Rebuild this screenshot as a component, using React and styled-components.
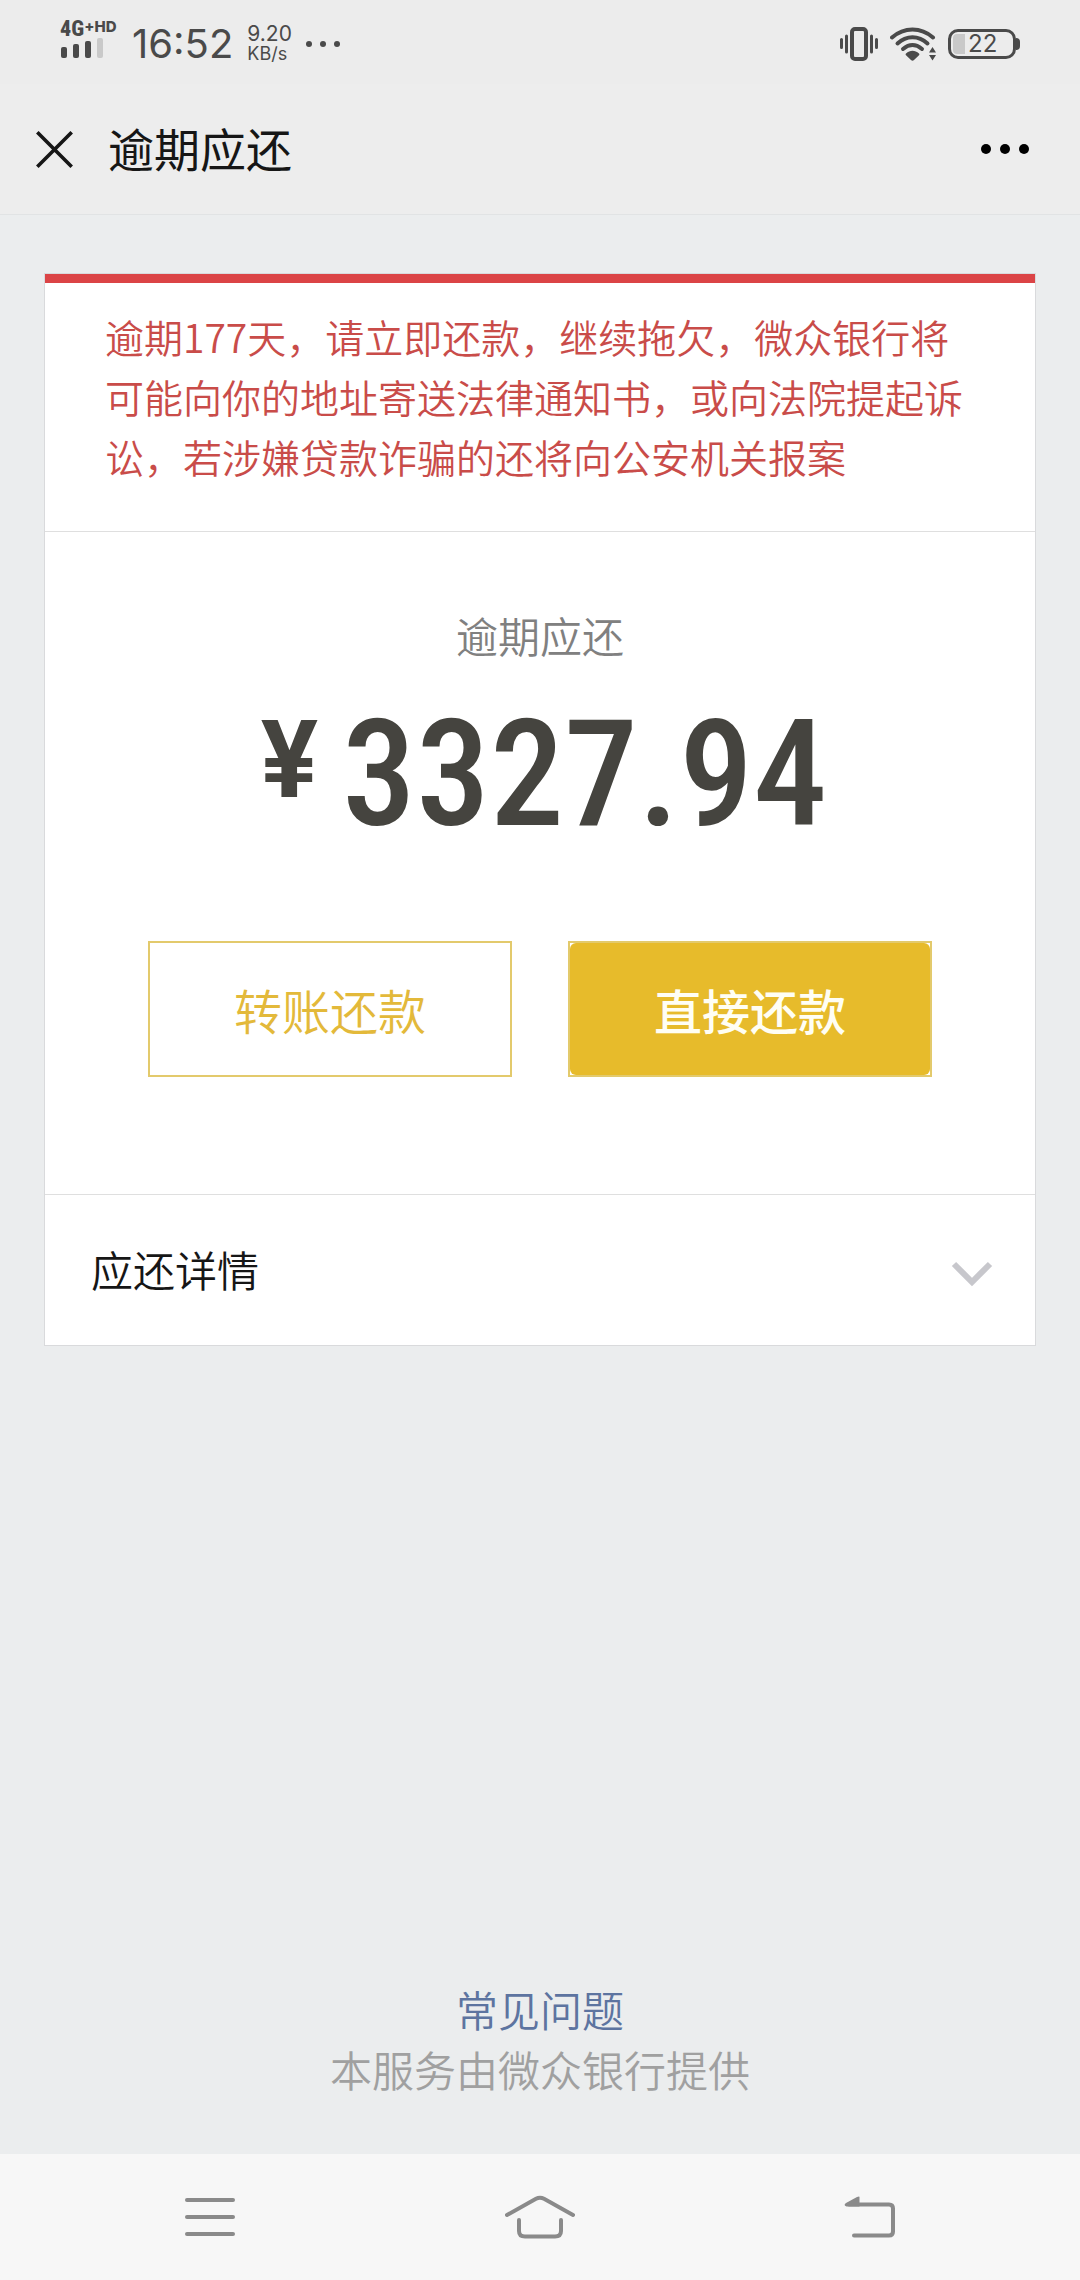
import React, { useState } from 'react';
import styled, { createGlobalStyle } from 'styled-components';

const GlobalStyle = createGlobalStyle`
  * {
    box-sizing: border-box;
  }

  body {
    margin: 0;
    background: #ebedee;
    font-family: 'Noto Sans CJK SC', sans-serif;
    font-weight: 350;
  }

  button {
    border: none;
    padding: 0;
    background: none;
    font: inherit;
    color: inherit;
    cursor: pointer;
  }

  svg {
    display: block;
  }
`;

const Page = styled.div`
  min-height: 100vh;
  display: flex;
  flex-direction: column;
`;

const StatusBar = styled.div`
  height: 84px;
  padding: 3px 60px 0;
  display: flex;
  justify-content: space-between;
  align-items: center;
  background: #ececec;
  color: #4a4a4a;
  font-family: Inter, sans-serif;
  font-weight: 400;
`;

const StatusGroup = styled.div`
  display: flex;
  align-items: center;
  gap: ${props => props.$gap};
`;

const Signal = styled.div`
  width: 58px;
  padding-bottom: 8px;
  display: flex;
  flex-direction: column;
`;

const Network = styled.div`
  display: flex;
  align-items: flex-start;
  font-size: 15px;
  line-height: 12px;
  font-weight: 800;
`;

const NetworkType = styled.span`
  font-family: 'Roboto Condensed', Roboto, sans-serif;
  font-size: 22px;
  line-height: 16px;
`;

const Clock = styled.span`
  font-size: 40px;
  line-height: 44px;
`;

const Speed = styled.div`
  display: flex;
  flex-direction: column;
`;

const SpeedLine = styled.span`
  font-size: ${props => props.$size};
  line-height: 20px;
`;

const Battery = styled.div`
  display: flex;
  align-items: center;
`;

const BatteryBody = styled.div`
  width: 68px;
  height: 30px;
  padding: 0 2px;
  display: flex;
  align-items: center;
  gap: 3px;
  border: 3px solid #4a4a4a;
  border-radius: 10px;
  font-size: 24px;
  line-height: 24px;
`;

const BatteryLevel = styled.div`
  width: 12px;
  height: 20px;
  background: #c9c9c9;
  border-radius: 4px 0 0 4px;
`;

const BatteryCap = styled.div`
  width: 4px;
  height: 12px;
  background: #4a4a4a;
  border-radius: 0 4px 4px 0;
`;

const Header = styled.header`
  height: 131px;
  padding: 0 51px 0 36px;
  display: flex;
  align-items: center;
  gap: 35px;
  background: #ededed;
  border-bottom: 1px solid #e1e3e4;
`;

const HeaderTitle = styled.h1`
  flex: 1;
  margin: 0;
  padding-bottom: 4px;
  font-size: 46px;
  line-height: 60px;
  font-weight: 400;
  color: #161616;
`;

const Main = styled.main`
  flex: 1;
  display: flex;
  flex-direction: column;
  padding: 58px 44px 55px;
`;

const Card = styled.section`
  background: #fff;
  border: 1px solid #d9dadc;
`;

const Notice = styled.p`
  margin: 0;
  padding: 23px 60px 45px;
  border-top: 9px solid #db4446;
  border-bottom: 1px solid #dfdfdf;
  font-size: 39px;
  line-height: 60px;
  color: #c94c49;
`;

const Summary = styled.div`
  padding: 73px 24px 117px;
  border-bottom: 1px solid #dfdfdf;
`;

const SummaryLabel = styled.div`
  text-align: center;
  font-size: 42px;
  line-height: 60px;
  color: #808080;
`;

const Amount = styled.div`
  display: flex;
  justify-content: center;
  align-items: flex-start;
  gap: 24px;
  margin: 36px 0 92px;
  padding-left: 8px;
  font-family: 'Roboto Condensed', Roboto, sans-serif;
  font-weight: 500;
  color: #45443f;
`;

const Currency = styled.span`
  font-family: Roboto, sans-serif;
  font-size: 107px;
  line-height: 120px;
  font-weight: 700;
`;

const Digits = styled.span`
  font-size: 148px;
  line-height: 148px;
`;

const Actions = styled.div`
  display: flex;
  justify-content: center;
  gap: 56px;
`;

const ActionButton = styled.button`
  width: 364px;
  height: 136px;
  border: 2px solid #e3ca6c;
  font-size: 48px;
  line-height: 72px;
  color: #e3b93a;
`;

const PrimaryButton = styled(ActionButton)`
  font-weight: 500;
  color: #fffef4;
`;

const PrimaryFill = styled.span`
  height: 100%;
  display: flex;
  align-items: center;
  justify-content: center;
  background: #e7bb2b;
  border-radius: 6px;
`;

const DetailRow = styled.button`
  width: 100%;
  height: 150px;
  padding: 0 42px 2px 46px;
  display: flex;
  justify-content: space-between;
  align-items: center;
  font-size: 42px;
  line-height: 60px;
  color: #161616;
`;

const Chevron = styled.svg`
  transform: ${props => (props.$open ? 'rotate(180deg)' : 'none')};
`;

const Footer = styled.footer`
  margin-top: auto;
  text-align: center;
  font-size: 42px;
  line-height: 60px;
  color: #a0a0a0;
`;

const HelpLink = styled.a`
  display: block;
  color: #5d74a0;
  text-decoration: none;
`;

const NavBar = styled.nav`
  height: 126px;
  padding: 0 45px;
  display: flex;
  background: #f7f7f7;
`;

const NavButton = styled.button`
  flex: 1;
  display: flex;
  align-items: center;
  justify-content: center;
`;

const SignalBars = () => (
  <svg width="44" height="21" viewBox="0 0 44 21" fill="#4a4a4a">
    <rect x="1" y="10" width="6" height="11" rx="2" />
    <rect x="13" y="7" width="6" height="14" rx="2" />
    <rect x="25" y="4" width="6" height="17" rx="2" />
    <rect x="37" y="1" width="6" height="20" rx="2" fill="#c9c9c9" />
  </svg>
);

const Dots = ({ radius, step, color }) => (
  <svg
    width={step * 2 + radius * 2}
    height={radius * 2}
    viewBox={`0 0 ${step * 2 + radius * 2} ${radius * 2}`}
    fill={color}
  >
    {[0, 1, 2].map(i => (
      <circle key={i} cx={radius + i * step} cy={radius} r={radius} />
    ))}
  </svg>
);

const VibrateIcon = () => (
  <svg width="38" height="34" viewBox="0 0 38 34" fill="none" stroke="#4a4a4a">
    <rect x="12" y="2" width="14" height="30" rx="3" strokeWidth="4" />
    <path d="M1.500 12.500v8M6.500 9v16M31.500 9v16M36.500 12.500v8" strokeWidth="3" strokeLinecap="round" />
  </svg>
);

const WifiIcon = () => (
  <svg width="46" height="34" viewBox="0 0 46 34">
    <g fill="none" stroke="#4a4a4a" strokeWidth="4" strokeLinecap="round">
      <path d="M2 10.500C14 -.2 31 -.2 43 10.500" />
      <path d="M7.500 16.500C16.500 8.200 28.500 8.200 37.500 16.500" />
      <path d="M13 22C19.500 16.600 25.500 16.600 32 22" />
    </g>
    <path
      d="M16 26.500c4-3.600 9-3.600 13 0 .6.500.5 1.200 0 1.800l-5 4.700c-1 .9-2 .9-3 0l-5-4.700c-.5-.6-.6-1.300 0-1.800z"
      fill="#4a4a4a"
    />
    <path d="M42.500 20l3.500 5.500h-7zM42.500 33.500l3.500-5.500h-7z" fill="#4a4a4a" />
  </svg>
);

const CloseIcon = () => (
  <svg width="37" height="37" viewBox="0 0 37 37" stroke="#161616" strokeWidth="3.6">
    <path d="M1.300 1.300l34.400 34.400M35.700 1.300L1.300 35.700" />
  </svg>
);

const MenuIcon = () => (
  <svg width="50" height="40" viewBox="0 0 50 40" fill="#8a8a8a">
    <rect x="0" y="1" width="50" height="4" rx="2" />
    <rect x="0" y="18" width="50" height="4" rx="2" />
    <rect x="0" y="35" width="50" height="4" rx="2" />
  </svg>
);

const HomeIcon = () => (
  <svg
    width="70"
    height="44"
    viewBox="0 0 70 44"
    fill="none"
    stroke="#8a8a8a"
    strokeWidth="4"
    strokeLinecap="round"
    strokeLinejoin="round"
  >
    <path d="M2 20L31 3.800Q35 1.600 39 3.800L68 20" />
    <path d="M14 25v11q0 5.500 6 5.500h30q6 0 6-5.500V25" />
  </svg>
);

const BackIcon = () => (
  <svg width="52" height="42" viewBox="0 0 52 42">
    <path
      d="M5 8.500h40q4 0 4 4v23q0 4-4 4H10"
      fill="none"
      stroke="#8a8a8a"
      strokeWidth="4"
      strokeLinecap="round"
    />
    <path d="M15.500 1v9.500H2.500Q-1 9.500 2 7L13 1q2.500-1 2.500 0z" fill="#8a8a8a" />
  </svg>
);

const App = () => {
  const [open, setOpen] = useState(false);

  return (
    <Page>
      <GlobalStyle />
      <StatusBar>
        <StatusGroup $gap="14px">
          <Signal>
            <Network>
              <NetworkType>4G</NetworkType>+HD
            </Network>
            <SignalBars />
          </Signal>
          <Clock>16:52</Clock>
          <Speed>
            <SpeedLine $size="21px">9.20</SpeedLine>
            <SpeedLine $size="18px">KB/s</SpeedLine>
          </Speed>
          <Dots radius={3} step={14} color="#4a4a4a" />
        </StatusGroup>
        <StatusGroup $gap="12px">
          <VibrateIcon />
          <WifiIcon />
          <Battery>
            <BatteryBody>
              <BatteryLevel />
              22
            </BatteryBody>
            <BatteryCap />
          </Battery>
        </StatusGroup>
      </StatusBar>

      <Header>
        <button type="button" aria-label="关闭">
          <CloseIcon />
        </button>
        <HeaderTitle>逾期应还</HeaderTitle>
        <button type="button" aria-label="更多">
          <Dots radius={5} step={19} color="#000" />
        </button>
      </Header>

      <Main>
        <Card>
          <Notice>
            逾期177天，请立即还款，继续拖欠，微众银行将可能向你的地址寄送法律通知书，或向法院提起诉讼，若涉嫌贷款诈骗的还将向公安机关报案
          </Notice>
          <Summary>
            <SummaryLabel>逾期应还</SummaryLabel>
            <Amount>
              <Currency>¥</Currency>
              <Digits>3327.94</Digits>
            </Amount>
            <Actions>
              <ActionButton type="button">转账还款</ActionButton>
              <PrimaryButton type="button">
                <PrimaryFill>直接还款</PrimaryFill>
              </PrimaryButton>
            </Actions>
          </Summary>
          <DetailRow type="button" aria-expanded={open} onClick={() => setOpen(!open)}>
            应还详情
            <Chevron $open={open} width="42" height="36" viewBox="0 0 42 36" fill="none">
              <path d="M3 13l18 18L39 13" stroke="#c7c7cc" strokeWidth="6" />
            </Chevron>
          </DetailRow>
        </Card>

        <Footer>
          <HelpLink href="#faq">常见问题</HelpLink>
          本服务由微众银行提供
        </Footer>
      </Main>

      <NavBar>
        <NavButton type="button" aria-label="菜单">
          <MenuIcon />
        </NavButton>
        <NavButton type="button" aria-label="主页">
          <HomeIcon />
        </NavButton>
        <NavButton type="button" aria-label="返回">
          <BackIcon />
        </NavButton>
      </NavBar>
    </Page>
  );
};

export default App;
